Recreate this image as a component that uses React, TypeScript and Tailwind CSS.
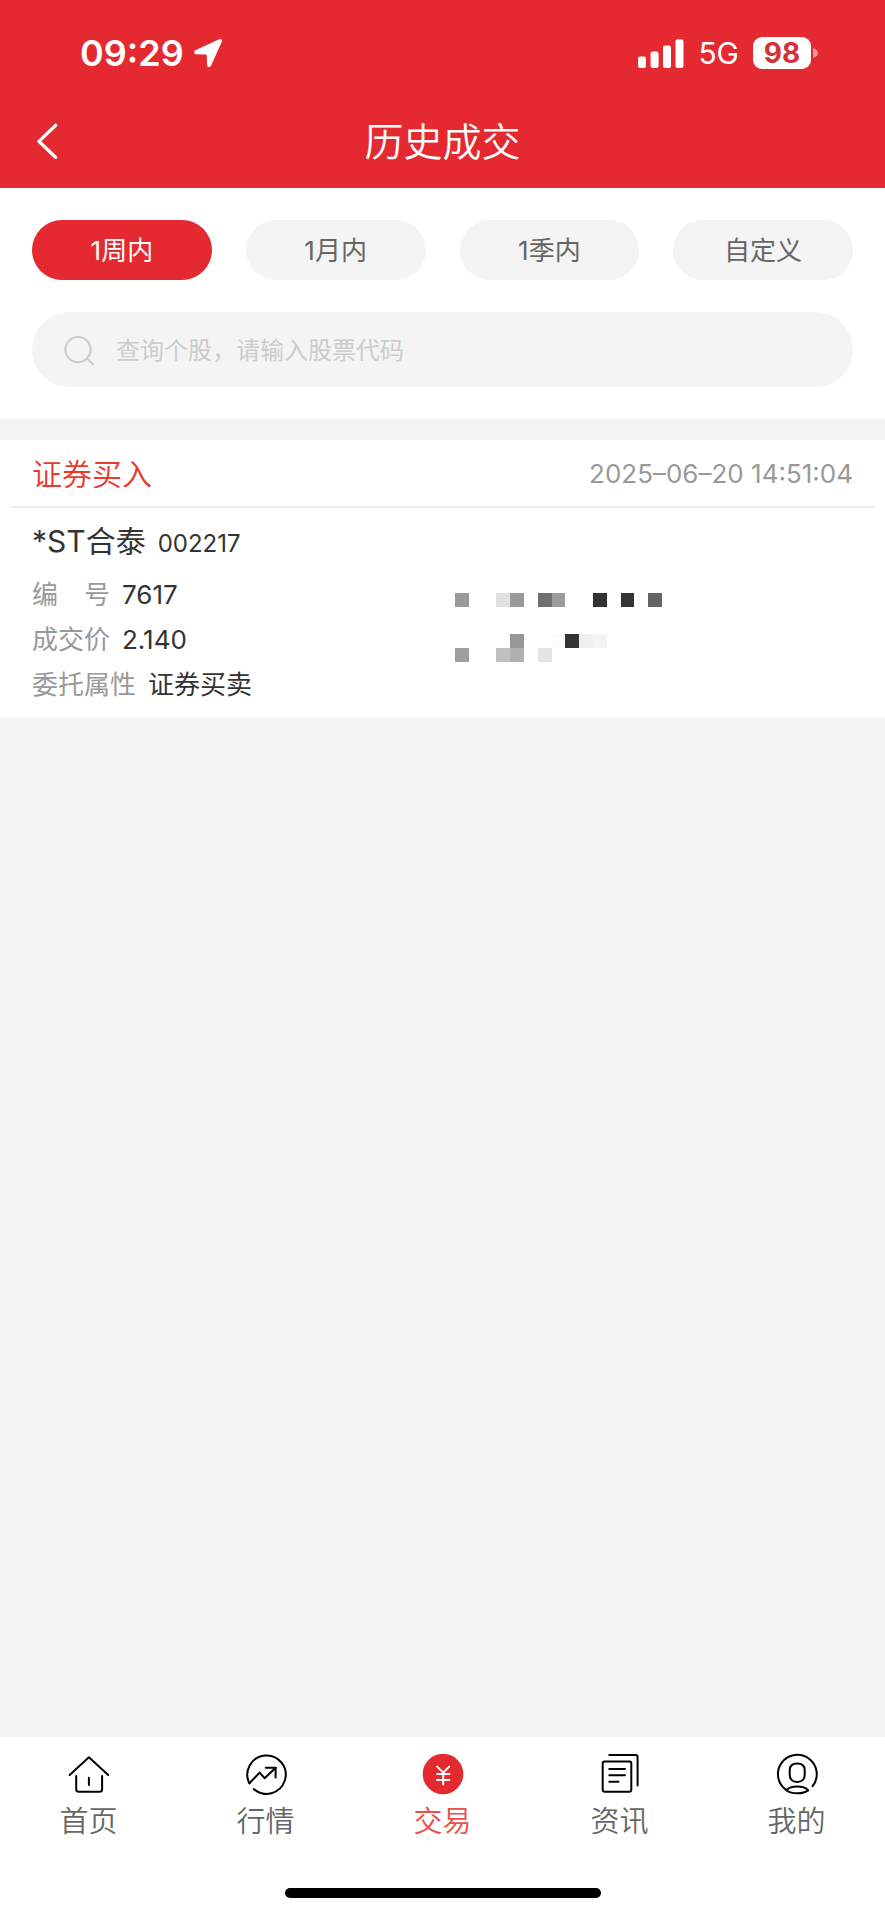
import type { ReactNode } from "react";

const RED = "#e52930";

const ranges = ["1周内", "1月内", "1季内", "自定义"];

const details = [
  { label: "编\u3000号", value: "7617" },
  { label: "成交价", value: "2.140" },
  { label: "委托属性", value: "证券买卖" },
];

const maskCells: [number, number, string][] = [
  [0, 0, "#9a9a9a"],
  [3, 0, "#e1e1e1"],
  [4, 0, "#9a9a9a"],
  [6, 0, "#6f6f6f"],
  [7, 0, "#9b9b9b"],
  [10, 0, "#333333"],
  [12, 0, "#333333"],
  [14, 0, "#656565"],
  [4, 3, "#979797"],
  [7, 3, "#fcfcfc"],
  [8, 3, "#333333"],
  [9, 3, "#efefef"],
  [10, 3, "#f4f4f4"],
  [0, 4, "#9e9e9e"],
  [3, 4, "#c0c0c0"],
  [4, 4, "#b0b0b0"],
  [6, 4, "#e5e5e5"],
];

function StatusBar() {
  return (
    <div className="flex h-[94px] items-center justify-between pt-3 pr-[67px] pl-20">
      <div className="flex items-center gap-2.5">
        <span className="text-[36px] leading-none font-semibold">09:29</span>
        <svg viewBox="0 0 28 28" className="size-7" fill="currentColor" aria-hidden="true">
          <path d="M25.2.3 1.4 11.2C-.4 12-.2 15.2 1.8 15.3L11.6 15.6C12.4 15.6 12.8 16 12.8 16.8L13.1 26C13.2 28.4 16.1 28.7 17 26.8L27.8 2.8C28.5 1 27-.5 25.2.3Z" />
        </svg>
      </div>
      <div className="flex items-center">
        <svg viewBox="0 0 46 29" className="h-[29px] w-[46px]" fill="currentColor" aria-hidden="true">
          <rect x="0" y="17.5" width="8" height="11.5" rx="2.2" />
          <rect x="12.6" y="12.5" width="8" height="16.5" rx="2.2" />
          <rect x="25" y="6.5" width="8" height="22.5" rx="2.2" />
          <rect x="37.5" y="0.3" width="8" height="28.7" rx="2.2" />
        </svg>
        <span className="ml-3.5 text-[30px] leading-none">5G</span>
        <span className="ml-3.5 flex h-8 w-[58px] items-center justify-center rounded-[9px] bg-white text-[28px] leading-none font-bold text-[#d62f36]">
          98
        </span>
        <svg viewBox="0 0 5 10" className="ml-0.5 h-2.5 w-[5px]" aria-hidden="true">
          <path d="M0 0C3 1 5 3 5 5S3 9 0 10Z" fill="#f39a9e" />
        </svg>
      </div>
    </div>
  );
}

function HomeIcon() {
  return (
    <>
      <path d="M0.6 21 19.9 3.2 39.2 21" />
      <path d="M7.2 22V35.3Q7.2 37.8 9.7 37.8H30.6Q33.1 37.8 33.1 35.3V22" />
      <path d="M19.9 23.8V31" />
    </>
  );
}

function MarketIcon() {
  return (
    <>
      <path d="M3.4 29.3A19.2 19.2 0 1 1 7.8 35" />
      <path d="M3.4 29.3 13.6 18.6 18.6 24.2 29.6 13.7" />
      <path d="M19.8 13.7H29.6V23.4" />
    </>
  );
}

function TradeIcon() {
  return (
    <>
      <circle cx="20" cy="20" r="20.3" fill={RED} stroke="none" />
      <path d="M14.2 12.6 20.2 18.6 26.2 12.6M14 20H26.4M14 26H26.4M20.2 18.6V30.6" stroke="#fff" />
    </>
  );
}

function NewsIcon() {
  return (
    <>
      <rect x="2.7" y="7.5" width="28.6" height="30.2" rx="2" />
      <path d="M9.3 1H35.5Q37.6 1 37.6 3.1V31.4" />
      <path d="M9.3 15H25M9.3 21.3H25M9.3 27.7H18.5" />
    </>
  );
}

function ProfileIcon() {
  return (
    <>
      <path d="M35.6 32.2A19.4 19.4 0 1 0 9.4 36.2" />
      <path d="M20.2 9.4C25.6 9.4 27.7 12.6 27.7 16V21C27.7 24.6 25.4 28 20.2 28S12.7 24.6 12.7 21V16C12.7 12.6 14.8 9.4 20.2 9.4Z" />
      <path d="M9.4 36.2C12 33.4 15 32.6 20 32.6S28.6 33.4 31.2 36.4C26 40.2 15 40.4 9.4 36.2Z" />
    </>
  );
}

const tabs: { label: string; icon: ReactNode }[] = [
  { label: "首页", icon: <HomeIcon /> },
  { label: "行情", icon: <MarketIcon /> },
  { label: "交易", icon: <TradeIcon /> },
  { label: "资讯", icon: <NewsIcon /> },
  { label: "我的", icon: <ProfileIcon /> },
];

export default function App() {
  return (
    <div className="flex min-h-screen flex-col bg-[#f4f4f4] font-[Inter,'Noto_Sans_CJK_SC',sans-serif] text-[#333333]">
      <header className="bg-[#e52930] text-white">
        <StatusBar />
        <div className="grid h-[94px] grid-cols-[1fr_auto_1fr] items-center px-8">
          <button type="button" aria-label="返回" className="flex size-8 items-center justify-center">
            <svg viewBox="0 0 32 36" className="h-9 w-8 shrink-0" fill="none" stroke="currentColor" strokeWidth="3.4" strokeLinecap="round" strokeLinejoin="round" aria-hidden="true">
              <path d="M23.6 2.4 7 18.4 23.6 34.4" />
            </svg>
          </button>
          <h1 className="text-[39px] leading-none font-[350]">历史成交</h1>
        </div>
      </header>

      <main className="flex-1">
        <section className="flex flex-col gap-8 bg-white px-8 py-8">
          <div className="grid grid-cols-4 gap-[34px]">
            {ranges.map((range, i) => (
              <button
                key={range}
                type="button"
                aria-pressed={i === 0}
                className={
                  i === 0
                    ? "h-[60px] rounded-full bg-[#e52930] pt-0.5 text-[26px] leading-none text-white"
                    : "h-[60px] rounded-full bg-[#f4f4f4] pt-0.5 text-[26px] leading-none text-[#666666]"
                }
              >
                {range}
              </button>
            ))}
          </div>
          <label className="flex h-[75px] items-center gap-[22px] rounded-full bg-[#f4f4f4] px-8 pt-0.5">
            <svg viewBox="0 0 30 30" className="size-[30px] shrink-0" fill="none" stroke="#cccccc" strokeWidth="2.2" strokeLinecap="round" aria-hidden="true">
              <circle cx="14" cy="13.6" r="12.6" />
              <path d="M23.4 23 29.2 28.4" />
            </svg>
            <input
              type="text"
              aria-label="查询个股"
              placeholder="查询个股，请输入股票代码"
              className="min-w-0 flex-1 bg-transparent text-[24px] outline-none placeholder:text-[#cccccc]"
            />
          </label>
        </section>

        <article className="mt-[21px] bg-white">
          <div className="mx-[11px] flex h-[68px] items-center justify-between border-b-2 border-[#ececec] px-[21px] pt-0.5">
            <h2 className="text-[30px] leading-none font-[350] text-[#e8392c]">证券买入</h2>
            <time dateTime="2025-06-20T14:51:04" className="text-[26px] leading-none text-[#999999]">
              2025–06–20 14:51:04
            </time>
          </div>
          <div className="px-8 pb-[11px]">
            <div className="flex h-16 items-center pt-0.5">
              <h3 className="flex items-baseline gap-3 text-[30px] leading-none font-normal">
                *ST合泰 <span className="text-[24px]">002217</span>
              </h3>
            </div>
            <div className="grid grid-cols-2 gap-6">
              <dl>
                {details.map((d) => (
                  <div key={d.label} className="flex h-[45px] items-center gap-3 text-[26px] leading-none">
                    <dt className="text-[#999999]">{d.label}</dt>
                    <dd>{d.value}</dd>
                  </div>
                ))}
              </dl>
              <svg viewBox="0 0 15 5" className="mt-[21px] h-[69px] w-[207px]" shapeRendering="crispEdges" aria-hidden="true">
                {maskCells.map(([x, y, fill]) => (
                  <rect key={`${x}-${y}`} x={x} y={y} width="1" height="1" fill={fill} />
                ))}
              </svg>
            </div>
          </div>
        </article>
      </main>

      <footer className="bg-white">
        <nav className="grid grid-cols-5 pt-[17px]">
          {tabs.map((tab, i) => (
            <a
              key={tab.label}
              href="#"
              aria-current={i === 2 ? "page" : undefined}
              className={
                i === 2
                  ? "flex flex-col items-center gap-[13px] text-[29px] leading-none font-[350] text-[#e8504a]"
                  : "flex flex-col items-center gap-[13px] text-[29px] leading-none font-[350] text-[#666666]"
              }
            >
              <svg viewBox="0 0 40 40" className="size-10 overflow-visible" fill="none" stroke="#000" strokeWidth="2" strokeLinecap="round" strokeLinejoin="round" aria-hidden="true">
                {tab.icon}
              </svg>
              {tab.label}
            </a>
          ))}
        </nav>
        <div className="flex justify-center pt-[52px] pb-[17px]">
          <div className="h-2.5 w-[316px] rounded-full bg-black" />
        </div>
      </footer>
    </div>
  );
}
